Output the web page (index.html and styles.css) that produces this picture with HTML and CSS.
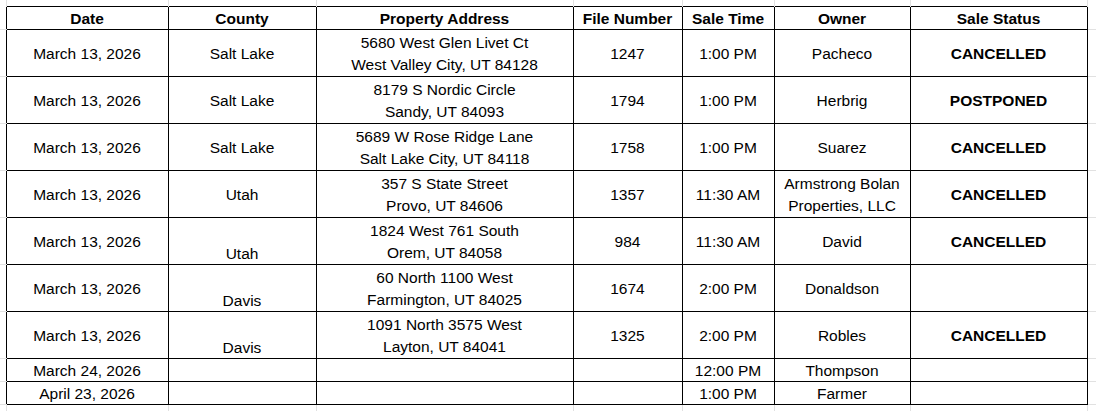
FILE: index.html
```html
<!DOCTYPE html>
<html lang="en">
<head>
<meta charset="utf-8">
<title>Sale Schedule</title>
<link rel="stylesheet" href="styles.css">
</head>
<body>
<table class="sheet">
  <colgroup>
    <col class="c-edge-l">
    <col class="c-date">
    <col class="c-county">
    <col class="c-addr">
    <col class="c-file">
    <col class="c-time">
    <col class="c-owner">
    <col class="c-status">
    <col class="c-edge-r">
  </colgroup>
  <tr class="r-edge-t">
    <td class="g g-v"></td><td class="g g-v"></td><td class="g g-v"></td><td class="g g-v"></td><td class="g g-v"></td><td class="g g-v"></td><td class="g g-v"></td><td class="g g-v"></td><td class="g"></td>
  </tr>
  <tr class="r-head">
    <td class="g g-h"></td>
    <th>Date</th>
    <th>County</th>
    <th>Property Address</th>
    <th>File Number</th>
    <th>Sale Time</th>
    <th>Owner</th>
    <th>Sale Status</th>
    <td class="g g-h"></td>
  </tr>
  <tr class="r-tall">
    <td class="g g-h"></td>
    <td>March 13, 2026</td>
    <td>Salt Lake</td>
    <td>5680 West Glen Livet Ct<br>West Valley City, UT 84128</td>
    <td>1247</td>
    <td>1:00 PM</td>
    <td>Pacheco</td>
    <td class="status">CANCELLED</td>
    <td class="g g-h"></td>
  </tr>
  <tr class="r-tall">
    <td class="g g-h"></td>
    <td>March 13, 2026</td>
    <td>Salt Lake</td>
    <td>8179 S Nordic Circle<br>Sandy, UT 84093</td>
    <td>1794</td>
    <td>1:00 PM</td>
    <td>Herbrig</td>
    <td class="status">POSTPONED</td>
    <td class="g g-h"></td>
  </tr>
  <tr class="r-tall">
    <td class="g g-h"></td>
    <td>March 13, 2026</td>
    <td>Salt Lake</td>
    <td>5689 W Rose Ridge Lane<br>Salt Lake City, UT 84118</td>
    <td>1758</td>
    <td>1:00 PM</td>
    <td>Suarez</td>
    <td class="status">CANCELLED</td>
    <td class="g g-h"></td>
  </tr>
  <tr class="r-tall">
    <td class="g g-h"></td>
    <td>March 13, 2026</td>
    <td>Utah</td>
    <td>357 S State Street<br>Provo, UT 84606</td>
    <td>1357</td>
    <td>11:30 AM</td>
    <td>Armstrong Bolan<br>Properties, LLC</td>
    <td class="status">CANCELLED</td>
    <td class="g g-h"></td>
  </tr>
  <tr class="r-tall">
    <td class="g g-h"></td>
    <td>March 13, 2026</td>
    <td class="bottom">Utah</td>
    <td>1824 West 761 South<br>Orem, UT 84058</td>
    <td>984</td>
    <td>11:30 AM</td>
    <td>David</td>
    <td class="status">CANCELLED</td>
    <td class="g g-h"></td>
  </tr>
  <tr class="r-tall">
    <td class="g g-h"></td>
    <td>March 13, 2026</td>
    <td class="bottom">Davis</td>
    <td>60 North 1100 West<br>Farmington, UT 84025</td>
    <td>1674</td>
    <td>2:00 PM</td>
    <td>Donaldson</td>
    <td class="status"></td>
    <td class="g g-h"></td>
  </tr>
  <tr class="r-tall">
    <td class="g g-h"></td>
    <td>March 13, 2026</td>
    <td class="bottom">Davis</td>
    <td>1091 North 3575 West<br>Layton, UT 84041</td>
    <td>1325</td>
    <td>2:00 PM</td>
    <td>Robles</td>
    <td class="status">CANCELLED</td>
    <td class="g g-h"></td>
  </tr>
  <tr class="r-short">
    <td class="g g-h"></td>
    <td>March 24, 2026</td>
    <td></td>
    <td></td>
    <td></td>
    <td>12:00 PM</td>
    <td>Thompson</td>
    <td class="status"></td>
    <td class="g g-h"></td>
  </tr>
  <tr class="r-short">
    <td class="g g-h"></td>
    <td>April 23, 2026</td>
    <td></td>
    <td></td>
    <td></td>
    <td>1:00 PM</td>
    <td>Farmer</td>
    <td class="status"></td>
    <td class="g g-h"></td>
  </tr>
  <tr class="r-edge-b">
    <td class="g g-v"></td><td class="g g-v"></td><td class="g g-v"></td><td class="g g-v"></td><td class="g g-v"></td><td class="g g-v"></td><td class="g g-v"></td><td class="g g-v"></td><td class="g"></td>
  </tr>
</table>
</body>
</html>
```

FILE: styles.css
```css
html, body {
  margin: 0;
  padding: 0;
  background: #ffffff;
  overflow: hidden;
}

.sheet {
  border-collapse: collapse;
  table-layout: fixed;
  width: 1096px;
  font-family: "Liberation Sans", Arial, sans-serif;
  font-size: 15.5px;
  color: #000000;
}

.c-edge-l { width: 6px; }
.c-date { width: 162px; }
.c-county { width: 148px; }
.c-addr { width: 257px; }
.c-file { width: 109px; }
.c-time { width: 92px; }
.c-owner { width: 136px; }
.c-status { width: 177px; }
.c-edge-r { width: 9px; }

.sheet td,
.sheet th {
  border: 1px solid #000000;
  padding: 2px 0 0;
  text-align: center;
  vertical-align: middle;
  line-height: 22px;
  white-space: nowrap;
  overflow: hidden;
}

.sheet th {
  font-weight: bold;
  line-height: 21px;
  padding-top: 1px;
}

.sheet td.g {
  border: none;
  padding: 0;
}

.sheet td.g-v {
  border-right: 1px solid #e1e1e1;
}

.sheet td.g-h {
  border-bottom: 1px solid #e1e1e1;
}

.r-edge-t { height: 6px; }
.r-head { height: 23px; }
.r-tall { height: 47px; }
.r-short { height: 23px; }
.r-short td {
  line-height: 21px;
  padding-top: 1px;
}
.r-edge-b { height: 7px; }

.sheet td.status {
  font-weight: bold;
}

.sheet td.bottom {
  vertical-align: bottom;
  line-height: 20px;
  padding-top: 0;
}
```
